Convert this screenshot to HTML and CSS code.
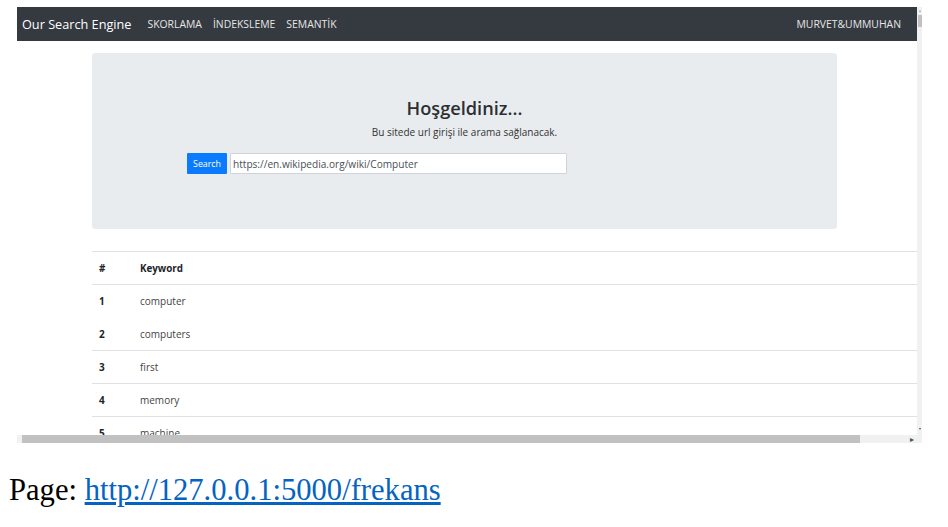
FILE: index.html
```html
<!DOCTYPE html>
<html lang="tr">
<head>
<meta charset="utf-8">
<title>Our Search Engine</title>
<link rel="stylesheet" href="styles.css">
</head>
<body>
<div class="doc">
  <div class="shot">
    <div class="viewport">
      <nav class="navbar">
        <span class="brand">Our Search Engine</span>
        <ul class="nav-links">
          <li>SKORLAMA</li>
          <li>İNDEKSLEME</li>
          <li>SEMANTİK</li>
        </ul>
        <span class="nav-user">MURVET&amp;UMMUHAN</span>
      </nav>
      <div class="container">
        <section class="jumbotron">
          <h1 class="title">Hoşgeldiniz...</h1>
          <p class="lead">Bu sitede url girişi ile arama sağlanacak.</p>
          <form class="search-form">
            <button type="button" class="btn">Search</button>
            <input class="url-input" type="text" value="https://en.wikipedia.org/wiki/Computer">
          </form>
        </section>
      </div>
      <table class="table">
        <thead>
          <tr><th class="col-num">#</th><th>Keyword</th></tr>
        </thead>
        <tbody>
          <tr><td class="col-num">1</td><td>computer</td></tr>
          <tr class="no-line"><td class="col-num">2</td><td>computers</td></tr>
          <tr><td class="col-num">3</td><td>first</td></tr>
          <tr><td class="col-num">4</td><td>memory</td></tr>
          <tr><td class="col-num">5</td><td>machine</td></tr>
        </tbody>
      </table>
    </div>
    <div class="vscroll">
      <span class="arrow-up"></span>
      <span class="vthumb"></span>
      <span class="arrow-down"></span>
    </div>
    <div class="hscroll">
      <span class="hleft"></span>
      <span class="hthumb"></span>
      <span class="hright">&#9656;</span>
    </div>
    <div class="corner"></div>
  </div>
  <p class="caption">Page: <a href="#">http://127.0.0.1:5000/frekans</a></p>
</div>
</body>
</html>
```
FILE: styles.css
```css
* { box-sizing: border-box; }
html, body { margin: 0; padding: 0; background: #fff; }
body { font-family: "Open Sans", "Noto Sans", sans-serif; color: #212529; }

.doc { padding-top: 7px; }

.shot {
  margin-left: 17px;
  width: 905px;
  height: 436px;
  display: grid;
  grid-template-columns: 900px 5px;
  grid-template-rows: 428px 8px;
  overflow: hidden;
}

.viewport { overflow: hidden; background: #fff; }

.navbar {
  height: 34px;
  background: #343a40;
  display: flex;
  align-items: center;
  padding: 0 16px 0 5px;
}
.brand { color: #fff; font-size: 12.7px; margin-right: 16px; }
.nav-links {
  list-style: none; margin: 0; padding: 0;
  display: flex; gap: 11px;
  color: #e6e6e6; font-size: 10.4px;
}
.nav-user { margin-left: auto; color: #e6e6e6; font-size: 10.4px; }

.container { padding: 12px 0 0 75px; }
.jumbotron {
  width: 745px;
  height: 176px;
  background: #e9ecef;
  border-radius: 3px;
  padding-top: 43px;
  display: flex;
  flex-direction: column;
  align-items: center;
}
.title { margin: 0; font-size: 18.2px; font-weight: 600; line-height: 24px; color: #2b2f33; }
.lead { margin: 5px 0 0; font-size: 10px; line-height: 14px; color: #333; }
.search-form {
  align-self: flex-start;
  margin: 14px 0 0 95px;
  display: flex;
  gap: 3px;
}
.btn {
  width: 40px; height: 21px;
  border: 0; border-radius: 1px;
  background: #0a7bff; color: #fff;
  font-family: inherit; font-size: 8.8px; padding: 0;
}
.url-input {
  width: 337px; height: 21px;
  border: 1px solid #ced4da; border-radius: 1px;
  background: #fff; color: #495057;
  font-family: inherit; font-size: 10.1px;
  padding: 0 2px;
}

.table {
  margin: 22px 0 0 75px;
  width: 825px;
  border-collapse: collapse;
  font-size: 10px;
}
.table th, .table td {
  height: 33px;
  padding: 0 0 0 7px;
  text-align: left;
  vertical-align: middle;
  border-top: 1px solid #dee2e6;
}
.table th { font-weight: 700; color: #212529; font-size: 9.8px; }
.table thead th { border-bottom: 1px solid #dee2e6; }
.table td { color: #444; }
.table td.col-num { font-weight: 700; color: #212529; }
.col-num { width: 41px; }
.table tr.no-line td { border-top: 0; }

.vscroll {
  background: #f1f1f1;
  position: relative;
}
.vthumb {
  position: absolute; left: 1px; right: 0; top: 8px; height: 12px;
  background: #c1c1c1;
}
.arrow-up {
  position: absolute; left: 2px; top: 3px;
  border-left: 1.5px solid transparent; border-right: 1.5px solid transparent;
  border-bottom: 2px solid #a3a3a3;
}
.arrow-down {
  position: absolute; left: 2px; bottom: 5px;
  border-left: 1.5px solid transparent; border-right: 1.5px solid transparent;
  border-top: 2px solid #505050;
}

.hscroll {
  background: #f1f1f1;
  display: flex;
  align-items: stretch;
}
.hleft { width: 5px; }
.hthumb { width: 838px; background: #c1c1c1; }
.hright {
  margin-left: auto; margin-right: 3px;
  font-size: 8px; line-height: 8px; color: #505050;
}
.corner { background: #f1f1f1; }

.caption {
  margin: 30px 0 0;
  padding-left: 9px;
  font-family: "Liberation Serif", "Times New Roman", serif;
  font-size: 30.6px;
  line-height: 35px;
  color: #000;
}
.caption a { color: #0563c1; text-decoration: underline; }
```
